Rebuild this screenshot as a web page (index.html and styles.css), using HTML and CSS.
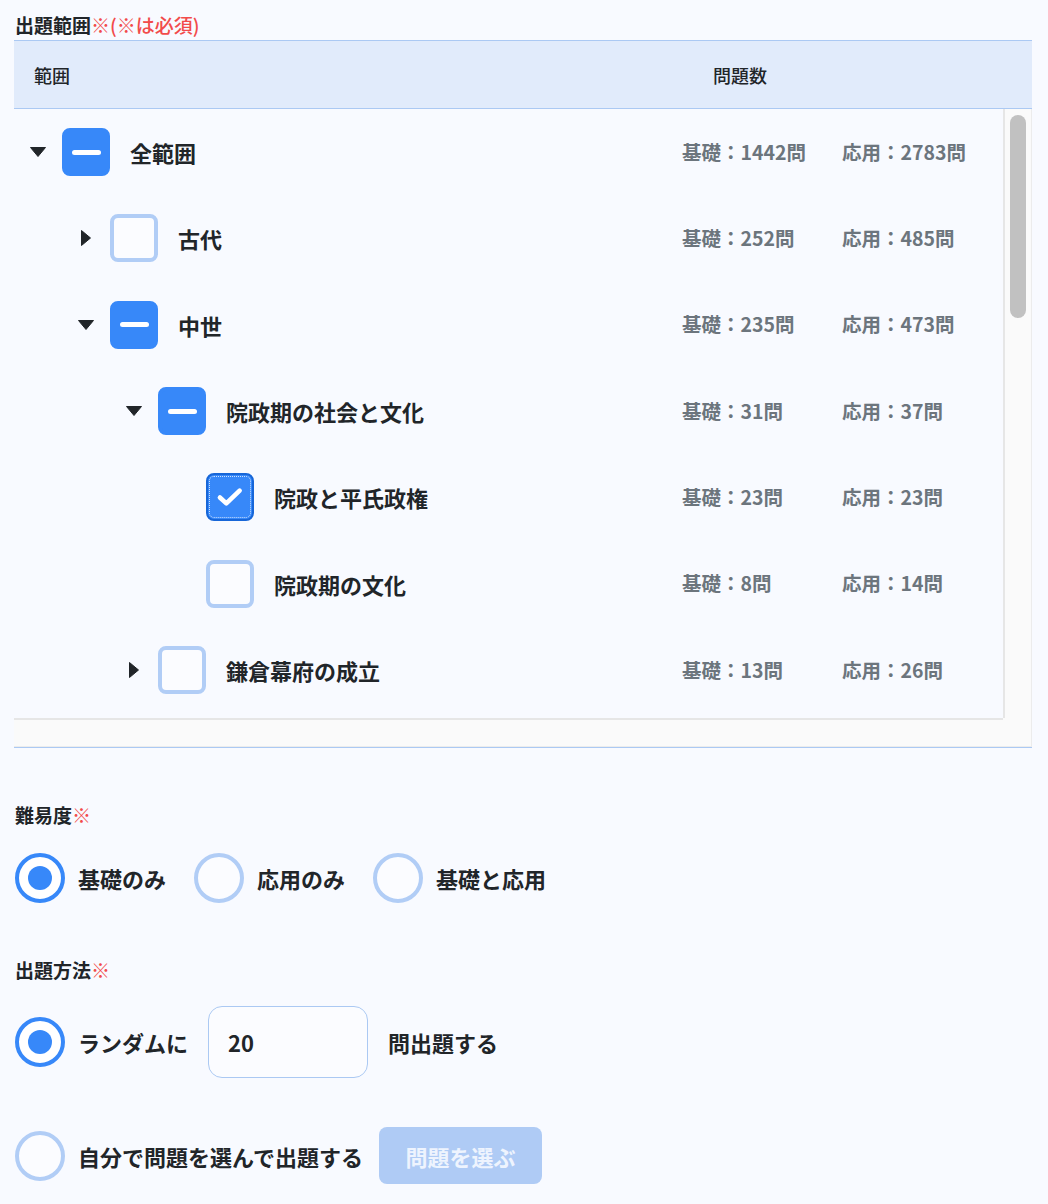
FILE: index.html
```html
<!DOCTYPE html>
<html lang="ja">
<head>
  <meta charset="UTF-8" />
  <meta name="viewport" content="width=device-width, initial-scale=1.0" />
  <title>出題設定</title>
  <link rel="stylesheet" href="styles.css">
</head>
<body>
  <div class="form">
    <div class="field-label">出題範囲<span class="req">※(※は必須)</span></div>

    <div class="range-table">
      <div class="range-head">
        <div class="head-name">範囲</div>
        <div class="head-count">問題数</div>
      </div>

      <div class="range-view">
        <div class="range-body">
          <div class="row lv0">
            <div class="node">
              <span class="caret"><svg viewBox="0 0 24 24"><path d="M4.5 7.5h15L12 16.5z"/></svg></span>
              <span class="check mixed"></span>
              <span class="name">全範囲</span>
            </div>
            <div class="count">基礎：1442問</div>
            <div class="count">応用：2783問</div>
          </div>

          <div class="row lv1">
            <div class="node">
              <span class="caret closed"><svg viewBox="0 0 24 24"><path d="M4.5 7.5h15L12 16.5z"/></svg></span>
              <span class="check"></span>
              <span class="name">古代</span>
            </div>
            <div class="count">基礎：252問</div>
            <div class="count">応用：485問</div>
          </div>

          <div class="row lv1">
            <div class="node">
              <span class="caret"><svg viewBox="0 0 24 24"><path d="M4.5 7.5h15L12 16.5z"/></svg></span>
              <span class="check mixed"></span>
              <span class="name">中世</span>
            </div>
            <div class="count">基礎：235問</div>
            <div class="count">応用：473問</div>
          </div>

          <div class="row lv2">
            <div class="node">
              <span class="caret"><svg viewBox="0 0 24 24"><path d="M4.5 7.5h15L12 16.5z"/></svg></span>
              <span class="check mixed"></span>
              <span class="name">院政期の社会と文化</span>
            </div>
            <div class="count">基礎：31問</div>
            <div class="count">応用：37問</div>
          </div>

          <div class="row lv3">
            <div class="node">
              <span class="caret"></span>
              <span class="check checked"><svg viewBox="0 0 48 48"><path d="M13 24.5l7 6.5 14.5-14"/></svg></span>
              <span class="name">院政と平氏政権</span>
            </div>
            <div class="count">基礎：23問</div>
            <div class="count">応用：23問</div>
          </div>

          <div class="row lv3">
            <div class="node">
              <span class="caret"></span>
              <span class="check"></span>
              <span class="name">院政期の文化</span>
            </div>
            <div class="count">基礎：8問</div>
            <div class="count">応用：14問</div>
          </div>

          <div class="row lv2">
            <div class="node">
              <span class="caret closed"><svg viewBox="0 0 24 24"><path d="M4.5 7.5h15L12 16.5z"/></svg></span>
              <span class="check"></span>
              <span class="name">鎌倉幕府の成立</span>
            </div>
            <div class="count">基礎：13問</div>
            <div class="count">応用：26問</div>
          </div>
        </div>

        <!-- scrollbars -->
        <div class="vbar"><div class="thumb"></div></div>
        <div class="hbar"></div>
        <div class="corner"></div>
      </div>
    </div>

    <div class="field-label section">難易度<span class="req">※</span></div>
    <div class="options">
      <label class="option"><span class="radio on"></span>基礎のみ</label>
      <label class="option"><span class="radio"></span>応用のみ</label>
      <label class="option"><span class="radio"></span>基礎と応用</label>
    </div>

    <div class="field-label section">出題方法<span class="req">※</span></div>
    <div class="method random">
      <span class="radio on"></span>
      <span class="opt-text">ランダムに</span>
      <input class="num" type="text" value="20">
      <span class="opt-text">問出題する</span>
    </div>
    <div class="method manual">
      <span class="radio"></span>
      <span class="opt-text">自分で問題を選んで出題する</span>
      <button class="pick" type="button" disabled>問題を選ぶ</button>
    </div>
  </div>
</body>
</html>
```

FILE: styles.css
```css
* {
  box-sizing: border-box;
}
body {
  margin: 0;
  background: #f8faff;
  color: #212529;
  font-family: "Noto Sans CJK JP", "Noto Sans", sans-serif;
}
.form {
  padding: 10px 16px 0 14px;
}

.field-label {
  font-size: 19px;
  font-weight: 700;
  line-height: 30px;
  padding-left: 1px;
}
.field-label .req {
  color: #f24b4b;
  font-weight: 500;
}
.field-label.section {
  margin-top: 52px;
}

/* range table */
.range-table {
  border-top: 1px solid #abc9f3;
  border-bottom: 1px solid #abc9f3;
}
.range-head {
  display: grid;
  grid-template-columns: 668px 1fr;
  align-items: center;
  height: 68px;
  background: #e1ebfb;
  border-bottom: 1px solid #abc9f3;
  font-size: 18px;
  font-weight: 500;
}
.head-name {
  padding-left: 20px;
}
.head-count {
  padding-left: 31px;
}

.range-view {
  display: grid;
  grid-template-columns: 1fr 29px;
  grid-template-rows: 609px 29px;
}
.range-body {
  overflow: hidden;
}
.vbar {
  background: #fafafa;
  border-left: 2px solid #e6e6e6;
  border-right: 1px solid #ececec;
  padding: 6px 0 0 5px;
}
.vbar .thumb {
  width: 16px;
  height: 203px;
  border-radius: 8px;
  background: #c1c1c1;
}
.hbar {
  background: #fafafa;
  border-top: 2px solid #e6e6e6;
  border-bottom: 1px solid #ececec;
}
.corner {
  background: #fafafa;
  border-right: 1px solid #ececec;
  border-bottom: 1px solid #ececec;
}

.row {
  display: grid;
  grid-template-columns: 668px 160px 1fr;
  align-items: center;
  height: 86.33px;
}
.node {
  display: flex;
  align-items: center;
}
.lv0 .node { padding-left: 12px; }
.lv1 .node { padding-left: 60px; }
.lv2 .node { padding-left: 108px; }
.lv3 .node { padding-left: 156px; }

.caret {
  width: 24px;
  height: 24px;
  margin-right: 12px;
  flex-shrink: 0;
}
.caret svg {
  display: block;
  width: 24px;
  height: 24px;
  fill: #212529;
  stroke: #212529;
  stroke-width: 1;
  stroke-linejoin: round;
}
.caret.closed svg {
  transform: rotate(-90deg);
}

.check {
  width: 48px;
  height: 48px;
  flex-shrink: 0;
  border: 4px solid #b1cdf6;
  border-radius: 8px;
  background: #fbfcff;
  display: flex;
  align-items: center;
  justify-content: center;
}
.check.mixed {
  border-color: #3788f9;
  background: #3788f9;
}
.check.mixed::before {
  content: "";
  width: 29px;
  height: 5px;
  border-radius: 3px;
  background: #fff;
}
.check.checked {
  border: 2px solid #1766d8;
  background: #3788f9;
  outline: 1px dotted rgba(255, 255, 255, 0.75);
  outline-offset: -4px;
}
.check.checked svg {
  width: 44px;
  height: 44px;
  fill: none;
  stroke: #fff;
  stroke-width: 5;
  stroke-linecap: round;
  stroke-linejoin: round;
}

.name {
  margin-left: 20px;
  font-size: 22px;
  font-weight: 700;
  white-space: nowrap;
}
.count {
  font-size: 19.5px;
  font-weight: 700;
  color: #6c757d;
  white-space: nowrap;
  margin-top: -2px;
}

/* radios */
.radio {
  width: 50px;
  height: 50px;
  flex-shrink: 0;
  border: 4px solid #b1cdf6;
  border-radius: 50%;
  background: #fbfcff;
  display: flex;
  align-items: center;
  justify-content: center;
}
.radio.on {
  border-color: #3788f9;
  background: #fff;
}
.radio.on::before {
  content: "";
  width: 24px;
  height: 24px;
  border-radius: 50%;
  background: #3788f9;
}

.options {
  display: flex;
  align-items: center;
  gap: 28px;
  margin-top: 23px;
  padding-left: 1px;
}
.option {
  display: flex;
  align-items: center;
  gap: 13px;
  font-size: 22px;
  font-weight: 700;
}

.method {
  display: flex;
  align-items: center;
  padding-left: 1px;
  font-size: 22px;
  font-weight: 700;
}
.method .radio {
  margin-right: 13px;
}
.method.random {
  margin-top: 21px;
}
.method.manual {
  margin-top: 49px;
  height: 57px;
}
.num {
  width: 160px;
  height: 72px;
  margin: 0 20px;
  padding: 0 0 0 19px;
  border: 1px solid #abc9f3;
  border-radius: 14px;
  background: #fbfcff;
  color: #212529;
  font-family: "Noto Sans CJK JP", "Noto Sans", sans-serif;
  font-size: 22px;
  font-weight: 700;
}
.pick {
  margin-left: 16px;
  width: 163px;
  height: 57px;
  border: none;
  border-radius: 8px;
  background: #afcbf5;
  color: #eef4fe;
  font-family: "Noto Sans CJK JP", "Noto Sans", sans-serif;
  font-size: 22px;
  font-weight: 700;
}
```
